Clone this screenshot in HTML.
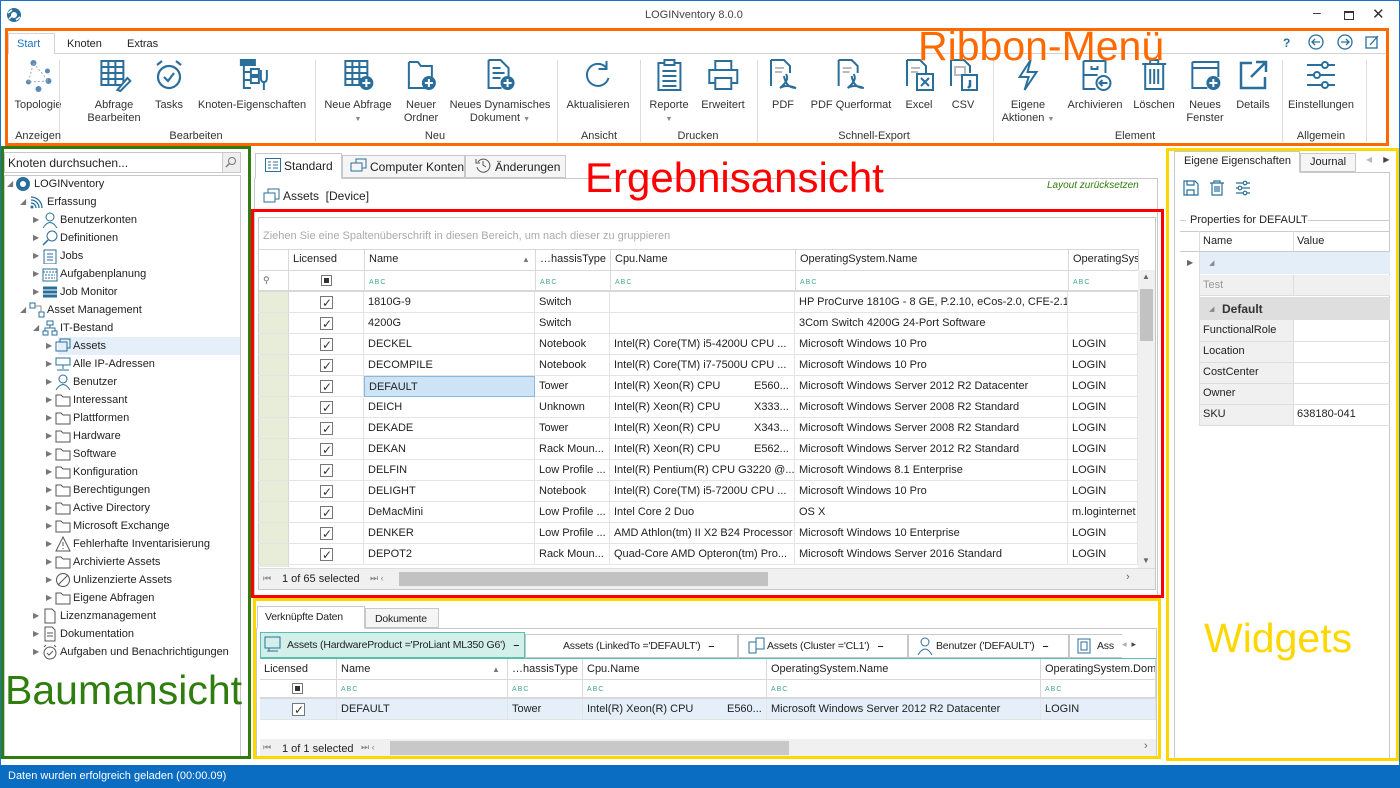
<!DOCTYPE html>
<html><head><meta charset="utf-8"><style>
*{box-sizing:border-box;margin:0;padding:0}
body{width:1400px;height:788px;position:relative;overflow:hidden;background:#fff;font-family:"Liberation Sans",sans-serif;font-size:11px;color:#222}
.a{position:absolute}
.t{position:absolute;white-space:nowrap}
.btn{position:absolute;top:58px;text-align:center;transform:translateX(-50%);line-height:13px;color:#333;white-space:nowrap}
.btn svg{display:block;margin:0 auto 7px;width:34px;height:34px}
.gl{position:absolute;top:130px;transform:translateX(-50%);color:#333;white-space:nowrap}
.sep{position:absolute;top:60px;width:1px;height:82px;background:#dcdcdc}
.tr{position:absolute;height:18px;line-height:18px;white-space:nowrap;color:#222}
.tr .ar{position:absolute;top:0;color:#777;font-size:8px}
.tr svg{position:absolute;top:1px;width:16px;height:16px}
.row{position:absolute;left:258px;width:880px;height:21px;border-bottom:1px solid #e4e4e4}
.c{position:absolute;top:0;height:21px;line-height:21px;border-right:1px solid #e4e4e4;padding-left:4px;overflow:hidden;white-space:nowrap}
.cb{position:absolute;width:13px;height:13px;border:1px solid #777;background:#fff;top:4px}
.cb:after{content:"✓";position:absolute;left:1px;top:-4px;font-size:12px;color:#333}
.hd{position:absolute;height:21px;line-height:21px;border-right:1px solid #d8d8d8;padding-left:4px;white-space:nowrap;overflow:hidden;color:#222}
.abc{font-size:7px;color:#4a8;letter-spacing:1px}
.st{font-size:10.5px;letter-spacing:-0.2px}
</style></head><body>
<div class="a" style="left:0;top:0;width:1400px;height:788px;border:1px solid #1a73c9"></div>
<svg class="a" style="left:6px;top:7px" width="16" height="16" viewBox="0 0 16 16"><circle cx="8" cy="8" r="7" fill="#2a6f9b"/><circle cx="8" cy="8" r="3" fill="#fff"/><path d="M2 6L6 3M10 13L14 10M3 12L6 9" stroke="#fff" stroke-width="1.5"/></svg>
<div class="t" style="left:645px;top:9px;color:#444;font-size:11px">LOGINventory 8.0.0</div>
<div class="t" style="left:1313px;top:4px;font-size:14px;color:#333">–</div>
<div class="a" style="left:1344px;top:11px;width:10px;height:9px;border:1px solid #333;border-top-width:2px"></div>
<div class="t" style="left:1372px;top:5px;font-size:15px;color:#333">✕</div>

<div class="a" style="left:8px;top:53px;width:1380px;height:1px;background:#d4d4d4"></div>
<div class="a" style="left:8px;top:33px;width:47px;height:21px;border:1px solid #d4d4d4;border-bottom:none;background:#fff"></div>
<div class="t" style="left:17px;top:38px;color:#1a73c9">Start</div>
<div class="t" style="left:67px;top:38px">Knoten</div>
<div class="t" style="left:127px;top:38px">Extras</div>
<div class="t" style="left:1283px;top:36px;color:#2a6f9b;font-weight:bold;font-size:12px">?</div>
<svg class="a" style="left:1308px;top:34px" width="80" height="17"><g fill="none" stroke="#2a6f9b" stroke-width="1.3"><circle cx="8" cy="8" r="7"/><path d="M12 8H4M7 5L4 8L7 11"/><circle cx="37" cy="8" r="7"/><path d="M33 8H41M38 5L41 8L38 11"/><rect x="58" y="3" width="11" height="11"/><path d="M62 11L70 2"/></g></svg>

<div class="btn" style="left:38px"><svg viewBox="0 0 34 34"><g fill="#5b8ab8"><circle cx="12" cy="5" r="3"/><circle cx="26" cy="13" r="2.5"/><circle cx="7" cy="24" r="2.5"/><circle cx="27" cy="23" r="3"/><circle cx="17" cy="31" r="3"/></g><path d="M12 5L27 23L7 24Z" stroke="#9ab" fill="none" stroke-dasharray="2 2"/></svg>Topologie</div>
<div class="btn" style="left:114px"><svg viewBox="0 0 34 34"><g fill="none" stroke="#2a6f9b" stroke-width="2"><rect x="4" y="3" width="22" height="24"/><path d="M4 9H26M4 15H26M4 21H26M11 3V27M18 3V27"/><path d="M20 32L30 20L33 23L23 33Z" fill="#fff"/></g></svg>Abfrage<br>Bearbeiten</div>
<div class="btn" style="left:169px"><svg viewBox="0 0 34 34"><g fill="none" stroke="#2a6f9b" stroke-width="2.2"><circle cx="17" cy="19" r="11"/><path d="M12 19L16 23L22 15M5 7L10 3M29 7L24 3"/></g></svg>Tasks</div>
<div class="btn" style="left:252px"><svg viewBox="0 0 34 34"><g fill="none" stroke="#2a6f9b" stroke-width="2"><rect x="6" y="2" width="14" height="5" fill="#2a6f9b"/><path d="M9 7V31M9 14H16M9 22H16M9 30H16"/><rect x="16" y="11" width="8" height="6"/><rect x="16" y="19" width="8" height="6"/><path d="M26 12V20Q26 24 29 24V32M32 12V20Q32 24 29 24"/></g></svg>Knoten-Eigenschaften</div>
<div class="btn" style="left:358px"><svg viewBox="0 0 34 34"><g fill="none" stroke="#2a6f9b" stroke-width="2"><rect x="4" y="3" width="22" height="24"/><path d="M4 9H26M4 15H26M4 21H26M11 3V27M18 3V27"/></g><circle cx="25" cy="25" r="7" fill="#2a6f9b"/><path d="M25 21V29M21 25H29" stroke="#fff" stroke-width="2"/></svg>Neue Abfrage<br><span style="font-size:7px;color:#888">▼</span></div>
<div class="btn" style="left:421px"><svg viewBox="0 0 34 34"><path d="M5 4H14L17 8H28V20M22 30H5V4" fill="none" stroke="#2a6f9b" stroke-width="2"/><circle cx="25" cy="25" r="7" fill="#2a6f9b"/><path d="M25 21V29M21 25H29" stroke="#fff" stroke-width="2"/></svg>Neuer<br>Ordner</div>
<div class="btn" style="left:500px"><svg viewBox="0 0 34 34"><path d="M6 2H18L26 10V18M19 30H6V2M10 10H18M10 15H22M10 20H18" fill="none" stroke="#2a6f9b" stroke-width="2"/><circle cx="25" cy="25" r="7" fill="#2a6f9b"/><path d="M25 21V29M21 25H29" stroke="#fff" stroke-width="2"/></svg>Neues Dynamisches<br>Dokument <span style="font-size:7px;color:#888">▼</span></div>
<div class="btn" style="left:598px"><svg viewBox="0 0 34 34"><path d="M26 10A11 11 0 1 0 28 20M26 3V11H18" fill="none" stroke="#2a6f9b" stroke-width="2"/></svg>Aktualisieren</div>
<div class="btn" style="left:669px"><svg viewBox="0 0 34 34"><g fill="none" stroke="#2a6f9b" stroke-width="2"><rect x="6" y="5" width="22" height="27"/><rect x="12" y="2" width="10" height="5" fill="#fff"/><path d="M10 13H24M10 18H24M10 23H24M10 28H24"/></g></svg>Reporte<br><span style="font-size:7px;color:#888">▼</span></div>
<div class="btn" style="left:723px"><svg viewBox="0 0 34 34"><g fill="none" stroke="#2a6f9b" stroke-width="2"><rect x="9" y="3" width="16" height="9"/><rect x="3" y="12" width="28" height="13"/><rect x="9" y="20" width="16" height="11" fill="#fff"/></g></svg>Erweitert</div>
<div class="btn" style="left:783px"><svg viewBox="0 0 34 34"><path d="M5 2H18L24 8V15M5 2V28" fill="none" stroke="#2a6f9b" stroke-width="2"/><path d="M9 10H18M9 14H16" stroke="#bbb" stroke-width="2"/><path d="M18 18Q20 30 30 30Q20 26 14 30Q24 22 20 16" fill="none" stroke="#2a6f9b" stroke-width="2"/></svg>PDF</div>
<div class="btn" style="left:851px"><svg viewBox="0 0 34 34"><path d="M5 2H18L24 8V15M5 2V28" fill="none" stroke="#2a6f9b" stroke-width="2"/><path d="M9 10H18M9 14H16" stroke="#bbb" stroke-width="2"/><path d="M18 18Q20 30 30 30Q20 26 14 30Q24 22 20 16" fill="none" stroke="#2a6f9b" stroke-width="2"/></svg>PDF Querformat</div>
<div class="btn" style="left:919px"><svg viewBox="0 0 34 34"><path d="M5 2H18L24 8V15M5 2V28" fill="none" stroke="#2a6f9b" stroke-width="2"/><path d="M9 10H18M9 14H16" stroke="#bbb" stroke-width="2"/><rect x="15" y="16" width="16" height="16" fill="none" stroke="#2a6f9b" stroke-width="2"/><path d="M19 20L27 28M27 20L19 28" stroke="#2a6f9b" stroke-width="2"/></svg>Excel</div>
<div class="btn" style="left:963px"><svg viewBox="0 0 34 34"><path d="M5 2H18L24 8V15M5 2V28" fill="none" stroke="#2a6f9b" stroke-width="2"/><rect x="9" y="9" width="10" height="8" fill="none" stroke="#bbb" stroke-width="2"/><rect x="16" y="17" width="15" height="15" fill="none" stroke="#2a6f9b" stroke-width="2"/><path d="M24 22V28L22 30" stroke="#2a6f9b" stroke-width="2.5"/></svg>CSV</div>
<div class="btn" style="left:1028px"><svg viewBox="0 0 34 34"><path d="M20 2L9 19H18L14 32L26 14H17Z" fill="none" stroke="#2a6f9b" stroke-width="2"/></svg>Eigene<br>Aktionen <span style="font-size:7px;color:#888">▼</span></div>
<div class="btn" style="left:1095px"><svg viewBox="0 0 34 34"><g fill="none" stroke="#2a6f9b" stroke-width="2"><path d="M5 3H27V15M5 3V31H17M5 17H19M13 8V11H19V8"/><circle cx="25" cy="25" r="7"/><path d="M29 25H21M24 22L21 25L24 28"/></g></svg>Archivieren</div>
<div class="btn" style="left:1154px"><svg viewBox="0 0 34 34"><g fill="none" stroke="#2a6f9b" stroke-width="2"><path d="M5 6H29M13 6V2H21V6M8 6V31H26V6M13 11V26M17 11V26M21 11V26"/></g></svg>Löschen</div>
<div class="btn" style="left:1205px"><svg viewBox="0 0 34 34"><g fill="none" stroke="#2a6f9b" stroke-width="2"><path d="M4 4H30V19M4 4V30H19M4 10H30"/></g><circle cx="25" cy="25" r="7" fill="#2a6f9b"/><path d="M25 21V29M21 25H29" stroke="#fff" stroke-width="2"/></svg>Neues<br>Fenster</div>
<div class="btn" style="left:1253px"><svg viewBox="0 0 34 34"><g fill="none" stroke="#2a6f9b" stroke-width="2.5"><path d="M16 5H5V30H29V19M20 4H30V14M30 4L15 19"/></g></svg>Details</div>
<div class="btn" style="left:1321px"><svg viewBox="0 0 34 34"><g fill="none" stroke="#2a6f9b" stroke-width="2"><path d="M3 7H31M3 17H31M3 27H31"/><circle cx="21" cy="7" r="3" fill="#fff"/><circle cx="13" cy="17" r="3" fill="#fff"/><circle cx="21" cy="27" r="3" fill="#fff"/></g></svg>Einstellungen</div>
<div class="sep" style="left:59px"></div><div class="sep" style="left:315px"></div><div class="sep" style="left:557px"></div><div class="sep" style="left:640px"></div><div class="sep" style="left:757px"></div><div class="sep" style="left:993px"></div><div class="sep" style="left:1282px"></div><div class="sep" style="left:1366px"></div>
<div class="gl" style="left:38px">Anzeigen</div><div class="gl" style="left:196px">Bearbeiten</div><div class="gl" style="left:435px">Neu</div><div class="gl" style="left:599px">Ansicht</div><div class="gl" style="left:698px">Drucken</div><div class="gl" style="left:874px">Schnell-Export</div><div class="gl" style="left:1135px">Element</div><div class="gl" style="left:1321px">Allgemein</div>
<div class="a" style="left:5px;top:28px;width:1384px;height:118px;border:3px solid #ff6a00"></div>
<div class="t" style="left:918px;top:23px;font-size:41px;color:#ff6a00">Ribbon-Menü</div>

<div class="a" style="left:4px;top:152px;width:237px;height:21px;border:1px solid #c8c8c8"></div>
<div class="t" style="left:8px;top:156px;font-size:12px">Knoten durchsuchen...</div>
<div class="a" style="left:222px;top:153px;width:18px;height:19px;background:#eee;border-left:1px solid #ccc"></div>
<svg class="a" style="left:225px;top:156px" width="12" height="12"><circle cx="7" cy="5" r="3.5" fill="none" stroke="#777"/><path d="M4.5 7.5L1 11" stroke="#777" stroke-width="1.3"/></svg>
<div class="a" style="left:4px;top:175px;width:237px;height:582px;border:1px solid #c8c8c8"></div>
<div class="a" style="left:58px;top:337px;width:182px;height:18px;background:#e4eff9"></div>

<div class="tr" style="left:34px;top:175px"><span class="ar" style="left:-27px">◢</span><svg style="left:-19px" viewBox="0 0 16 16"><circle cx="8" cy="8" r="7" fill="#2a6f9b"/><circle cx="8" cy="8" r="3" fill="#fff"/></svg>LOGINventory</div>
<div class="tr" style="left:47px;top:193px"><span class="ar" style="left:-27px">◢</span><svg style="left:-18px" viewBox="0 0 16 16"><path d="M2 6A8 8 0 0 1 10 14M2 9A5 5 0 0 1 7 14M2 3A11 11 0 0 1 13 14" fill="none" stroke="#2a6f9b" stroke-width="1.3"/><circle cx="3" cy="13" r="1.5" fill="#2a6f9b"/></svg>Erfassung</div>
<div class="tr" style="left:60px;top:211px"><span class="ar" style="left:-27px">▶</span><svg style="left:-18px" viewBox="0 0 16 16"><circle cx="8" cy="5" r="4" fill="none" stroke="#2a6f9b"/><path d="M1 16Q8 5 15 16" fill="none" stroke="#2a6f9b"/></svg>Benutzerkonten</div>
<div class="tr" style="left:60px;top:229px"><span class="ar" style="left:-27px">▶</span><svg style="left:-18px" viewBox="0 0 16 16"><circle cx="10" cy="6" r="5" fill="none" stroke="#2a6f9b"/><path d="M6 10L1 15" stroke="#2a6f9b" stroke-width="1.5"/></svg>Definitionen</div>
<div class="tr" style="left:60px;top:247px"><span class="ar" style="left:-27px">▶</span><svg style="left:-18px" viewBox="0 0 16 16"><rect x="2" y="2" width="12" height="14" fill="none" stroke="#2a6f9b"/><path d="M5 6H11M5 9H11M5 12H11" stroke="#2a6f9b"/></svg>Jobs</div>
<div class="tr" style="left:60px;top:265px"><span class="ar" style="left:-27px">▶</span><svg style="left:-18px" viewBox="0 0 16 16"><rect x="1" y="3" width="14" height="12" fill="none" stroke="#2a6f9b"/><path d="M1 6H15M3 9H13M3 12H13" stroke="#2a6f9b" stroke-dasharray="2 1"/></svg>Aufgabenplanung</div>
<div class="tr" style="left:60px;top:283px"><span class="ar" style="left:-27px">▶</span><svg style="left:-18px" viewBox="0 0 16 16"><path d="M1 4H15M1 8H15M1 12H15" stroke="#2a6f9b" stroke-width="3"/></svg>Job Monitor</div>
<div class="tr" style="left:47px;top:301px"><span class="ar" style="left:-27px">◢</span><svg style="left:-18px" viewBox="0 0 16 16"><rect x="1" y="1" width="5" height="5" fill="none" stroke="#2a6f9b"/><rect x="10" y="10" width="5" height="5" fill="none" stroke="#2a6f9b"/><path d="M6 4H12V10" stroke="#888" fill="none"/></svg>Asset Management</div>
<div class="tr" style="left:60px;top:319px"><span class="ar" style="left:-27px">◢</span><svg style="left:-18px" viewBox="0 0 16 16"><rect x="5" y="1" width="6" height="4" fill="none" stroke="#2a6f9b"/><rect x="1" y="11" width="5" height="4" fill="none" stroke="#2a6f9b"/><rect x="10" y="11" width="5" height="4" fill="none" stroke="#2a6f9b"/><path d="M8 5V8H3V11M8 8H13V11" stroke="#2a6f9b" fill="none"/></svg>IT-Bestand</div>
<div class="tr" style="left:73px;top:337px"><span class="ar" style="left:-27px">▶</span><svg style="left:-18px" viewBox="0 0 16 16"><rect x="1" y="4" width="11" height="9" fill="none" stroke="#2a6f9b"/><path d="M5 4V1H15V10H12" stroke="#2a6f9b" fill="none"/></svg>Assets</div>
<div class="tr" style="left:73px;top:355px"><span class="ar" style="left:-27px">▶</span><svg style="left:-18px" viewBox="0 0 16 16"><rect x="1" y="2" width="14" height="7" fill="none" stroke="#2a6f9b"/><path d="M8 9V13M2 14H14" stroke="#2a6f9b"/></svg>Alle IP-Adressen</div>
<div class="tr" style="left:73px;top:373px"><span class="ar" style="left:-27px">▶</span><svg style="left:-18px" viewBox="0 0 16 16"><circle cx="8" cy="5" r="4" fill="none" stroke="#2a6f9b"/><path d="M1 16Q8 5 15 16" fill="none" stroke="#2a6f9b"/></svg>Benutzer</div>
<div class="tr" style="left:73px;top:391px"><span class="ar" style="left:-27px">▶</span><svg style="left:-18px" viewBox="0 0 16 16"><path d="M1 3H6L8 5H15V14H1Z" fill="none" stroke="#555"/></svg>Interessant</div>
<div class="tr" style="left:73px;top:409px"><span class="ar" style="left:-27px">▶</span><svg style="left:-18px" viewBox="0 0 16 16"><path d="M1 3H6L8 5H15V14H1Z" fill="none" stroke="#555"/></svg>Plattformen</div>
<div class="tr" style="left:73px;top:427px"><span class="ar" style="left:-27px">▶</span><svg style="left:-18px" viewBox="0 0 16 16"><path d="M1 3H6L8 5H15V14H1Z" fill="none" stroke="#555"/></svg>Hardware</div>
<div class="tr" style="left:73px;top:445px"><span class="ar" style="left:-27px">▶</span><svg style="left:-18px" viewBox="0 0 16 16"><path d="M1 3H6L8 5H15V14H1Z" fill="none" stroke="#555"/></svg>Software</div>
<div class="tr" style="left:73px;top:463px"><span class="ar" style="left:-27px">▶</span><svg style="left:-18px" viewBox="0 0 16 16"><path d="M1 3H6L8 5H15V14H1Z" fill="none" stroke="#555"/></svg>Konfiguration</div>
<div class="tr" style="left:73px;top:481px"><span class="ar" style="left:-27px">▶</span><svg style="left:-18px" viewBox="0 0 16 16"><path d="M1 3H6L8 5H15V14H1Z" fill="none" stroke="#555"/></svg>Berechtigungen</div>
<div class="tr" style="left:73px;top:499px"><span class="ar" style="left:-27px">▶</span><svg style="left:-18px" viewBox="0 0 16 16"><path d="M1 3H6L8 5H15V14H1Z" fill="none" stroke="#555"/></svg>Active Directory</div>
<div class="tr" style="left:73px;top:517px"><span class="ar" style="left:-27px">▶</span><svg style="left:-18px" viewBox="0 0 16 16"><path d="M1 3H6L8 5H15V14H1Z" fill="none" stroke="#555"/></svg>Microsoft Exchange</div>
<div class="tr" style="left:73px;top:535px"><span class="ar" style="left:-27px">▶</span><svg style="left:-18px" viewBox="0 0 16 16"><path d="M8 1L15 15H1Z" fill="none" stroke="#555"/><path d="M8 6V10M8 12V13" stroke="#555"/></svg>Fehlerhafte Inventarisierung</div>
<div class="tr" style="left:73px;top:553px"><span class="ar" style="left:-27px">▶</span><svg style="left:-18px" viewBox="0 0 16 16"><path d="M1 3H6L8 5H15V14H1Z" fill="none" stroke="#555"/></svg>Archivierte Assets</div>
<div class="tr" style="left:73px;top:571px"><span class="ar" style="left:-27px">▶</span><svg style="left:-18px" viewBox="0 0 16 16"><circle cx="8" cy="8" r="6.5" fill="none" stroke="#555"/><path d="M3 13L13 3" stroke="#555"/></svg>Unlizenzierte Assets</div>
<div class="tr" style="left:73px;top:589px"><span class="ar" style="left:-27px">▶</span><svg style="left:-18px" viewBox="0 0 16 16"><path d="M1 3H6L8 5H15V14H1Z" fill="none" stroke="#555"/></svg>Eigene Abfragen</div>
<div class="tr" style="left:60px;top:607px"><span class="ar" style="left:-27px">▶</span><svg style="left:-18px" viewBox="0 0 16 16"><path d="M3 1H10L13 4V15H3Z" fill="none" stroke="#555"/></svg>Lizenzmanagement</div>
<div class="tr" style="left:60px;top:625px"><span class="ar" style="left:-27px">▶</span><svg style="left:-18px" viewBox="0 0 16 16"><path d="M3 1H10L13 4V15H3Z" fill="none" stroke="#555"/><path d="M5 7H11M5 10H11" stroke="#555"/></svg>Dokumentation</div>
<div class="tr" style="left:60px;top:643px"><span class="ar" style="left:-27px">▶</span><svg style="left:-18px" viewBox="0 0 16 16"><circle cx="8" cy="9" r="6" fill="none" stroke="#555"/><path d="M5 9L7 11L11 7M2 3L4 1M14 3L12 1" stroke="#555" fill="none"/></svg>Aufgaben und Benachrichtigungen</div>
<div class="a" style="left:1px;top:146px;width:250px;height:613px;border:3px solid #2e7d0e"></div>
<div class="t" style="left:5px;top:667px;font-size:41px;color:#2e7d0e">Baumansicht</div>

<div class="a" style="left:254px;top:178px;width:904px;height:1px;background:#c8c8c8"></div>
<div class="a" style="left:254px;top:178px;width:1px;height:420px;background:#c8c8c8"></div>
<div class="a" style="left:1157px;top:178px;width:1px;height:420px;background:#c8c8c8"></div>
<div class="a" style="left:255px;top:153px;width:87px;height:26px;border:1px solid #c8c8c8;border-bottom:1px solid #fff;background:#fff"></div>
<div class="a" style="left:342px;top:155px;width:123px;height:23px;border:1px solid #c8c8c8;background:#f5f5f5"></div>
<div class="a" style="left:465px;top:155px;width:101px;height:23px;border:1px solid #c8c8c8;background:#f5f5f5"></div>
<svg class="a" style="left:265px;top:158px" width="16" height="14"><rect x="0.5" y="0.5" width="15" height="13" fill="none" stroke="#2a6f9b"/><path d="M3 4H6M8 4H13M3 7H6M8 7H13M3 10H6M8 10H13" stroke="#2a6f9b"/></svg>
<div class="t" style="left:284px;top:159px;font-size:12px">Standard</div>
<svg class="a" style="left:350px;top:158px" width="18" height="16"><rect x="1" y="5" width="11" height="8" fill="none" stroke="#2a6f9b"/><path d="M6 5V1H16V10H12" fill="none" stroke="#2a6f9b"/></svg>
<div class="t" style="left:370px;top:160px;font-size:12px">Computer Konten</div>
<svg class="a" style="left:475px;top:157px" width="16" height="16"><path d="M3 5A6.5 6.5 0 1 1 2 10" fill="none" stroke="#555"/><path d="M1 2V6H5M8 4V8L11 10" fill="none" stroke="#555"/></svg>
<div class="t" style="left:495px;top:160px;font-size:12px">Änderungen</div>
<svg class="a" style="left:263px;top:188px" width="18" height="16"><rect x="1" y="5" width="11" height="9" fill="none" stroke="#2a6f9b"/><path d="M5 5V1H16V11H12" fill="none" stroke="#2a6f9b"/></svg>
<div class="t" style="left:283px;top:189px;font-size:12px">Assets&nbsp; [Device]</div>
<div class="t" style="left:1047px;top:180px;font-style:italic;color:#2e7d0e;font-size:10px">Layout zurücksetzen</div>
<div class="t" style="left:585px;top:154px;font-size:42px;color:#ff0000">Ergebnisansicht</div>

<div class="a" style="left:258px;top:217px;width:898px;height:373px;border:1px solid #c8c8c8"></div>
<div class="t" style="left:263px;top:230px;color:#aaa">Ziehen Sie eine Spaltenüberschrift in diesen Bereich, um nach dieser zu gruppieren</div>
<div class="a" style="left:259px;top:249px;width:879px;height:1px;background:#d8d8d8"></div>
<div class="a" style="left:259px;top:249px;width:880px;height:21px">
<div class="hd" style="left:0;width:30px"></div><div class="hd" style="left:30px;width:76px">Licensed</div><div class="hd" style="left:106px;width:171px">Name<span style="position:absolute;left:157px;font-size:8px;color:#777">▲</span></div><div class="hd" style="left:277px;width:75px">…hassisType</div><div class="hd" style="left:352px;width:185px">Cpu.Name</div><div class="hd" style="left:537px;width:273px">OperatingSystem.Name</div><div class="hd" style="left:810px;width:70px">OperatingSystem</div></div>
<div class="a" style="left:259px;top:270px;width:879px;height:22px;border-top:1px solid #d8d8d8;border-bottom:2px solid #d8d8d8">
<div class="hd" style="left:0;width:30px;color:#666;font-size:9px;height:19px;line-height:19px">⚲</div><div class="hd" style="left:30px;width:76px;height:19px"><span class="a" style="left:32px;top:4px;width:11px;height:11px;border:1px solid #777;background:#fff"><span class="a" style="left:2px;top:2px;width:5px;height:5px;background:#333"></span></span></div><div class="hd" style="left:106px;width:171px;height:19px"><span class="abc">ABC</span></div><div class="hd" style="left:277px;width:75px;height:19px"><span class="abc">ABC</span></div><div class="hd" style="left:352px;width:185px;height:19px"><span class="abc">ABC</span></div><div class="hd" style="left:537px;width:273px;height:19px"><span class="abc">ABC</span></div><div class="hd" style="left:810px;width:70px;height:19px"><span class="abc">ABC</span></div></div>
<div class="a" style="left:259px;top:292px;width:30px;height:275px;background:#e8edda;border-right:1px solid #d8d8d8"></div>

<div class="row" style="top:292px"><div class="c" style="left:30px;width:76px"><span class="cb" style="left:32px"></span></div><div class="c" style="left:106px;width:171px">1810G-9</div><div class="c" style="left:277px;width:75px">Switch</div><div class="c" style="left:352px;width:185px"></div><div class="c" style="left:537px;width:273px">HP ProCurve 1810G - 8 GE, P.2.10, eCos-2.0, CFE-2.1</div><div class="c" style="left:810px;width:70px"></div></div>
<div class="row" style="top:313px"><div class="c" style="left:30px;width:76px"><span class="cb" style="left:32px"></span></div><div class="c" style="left:106px;width:171px">4200G</div><div class="c" style="left:277px;width:75px">Switch</div><div class="c" style="left:352px;width:185px"></div><div class="c" style="left:537px;width:273px">3Com Switch 4200G 24-Port Software</div><div class="c" style="left:810px;width:70px"></div></div>
<div class="row" style="top:334px"><div class="c" style="left:30px;width:76px"><span class="cb" style="left:32px"></span></div><div class="c" style="left:106px;width:171px">DECKEL</div><div class="c" style="left:277px;width:75px">Notebook</div><div class="c" style="left:352px;width:185px">Intel(R) Core(TM) i5-4200U CPU ...</div><div class="c" style="left:537px;width:273px">Microsoft Windows 10 Pro</div><div class="c" style="left:810px;width:70px">LOGIN</div></div>
<div class="row" style="top:355px"><div class="c" style="left:30px;width:76px"><span class="cb" style="left:32px"></span></div><div class="c" style="left:106px;width:171px">DECOMPILE</div><div class="c" style="left:277px;width:75px">Notebook</div><div class="c" style="left:352px;width:185px">Intel(R) Core(TM) i7-7500U CPU ...</div><div class="c" style="left:537px;width:273px">Microsoft Windows 10 Pro</div><div class="c" style="left:810px;width:70px">LOGIN</div></div>
<div class="row" style="top:376px"><div class="c" style="left:30px;width:76px"><span class="cb" style="left:32px"></span></div><div class="c" style="left:106px;width:171px;background:#cde4f7;border:1px solid #8ab6e0">DEFAULT</div><div class="c" style="left:277px;width:75px">Tower</div><div class="c" style="left:352px;width:185px">Intel(R) Xeon(R) CPU&nbsp;&nbsp;&nbsp;&nbsp;&nbsp;&nbsp;&nbsp;&nbsp;&nbsp;&nbsp;&nbsp;E560...</div><div class="c" style="left:537px;width:273px">Microsoft Windows Server 2012 R2 Datacenter</div><div class="c" style="left:810px;width:70px">LOGIN</div></div>
<div class="row" style="top:397px"><div class="c" style="left:30px;width:76px"><span class="cb" style="left:32px"></span></div><div class="c" style="left:106px;width:171px">DEICH</div><div class="c" style="left:277px;width:75px">Unknown</div><div class="c" style="left:352px;width:185px">Intel(R) Xeon(R) CPU&nbsp;&nbsp;&nbsp;&nbsp;&nbsp;&nbsp;&nbsp;&nbsp;&nbsp;&nbsp;&nbsp;X333...</div><div class="c" style="left:537px;width:273px">Microsoft Windows Server 2008 R2 Standard</div><div class="c" style="left:810px;width:70px">LOGIN</div></div>
<div class="row" style="top:418px"><div class="c" style="left:30px;width:76px"><span class="cb" style="left:32px"></span></div><div class="c" style="left:106px;width:171px">DEKADE</div><div class="c" style="left:277px;width:75px">Tower</div><div class="c" style="left:352px;width:185px">Intel(R) Xeon(R) CPU&nbsp;&nbsp;&nbsp;&nbsp;&nbsp;&nbsp;&nbsp;&nbsp;&nbsp;&nbsp;&nbsp;X343...</div><div class="c" style="left:537px;width:273px">Microsoft Windows Server 2008 R2 Standard</div><div class="c" style="left:810px;width:70px">LOGIN</div></div>
<div class="row" style="top:439px"><div class="c" style="left:30px;width:76px"><span class="cb" style="left:32px"></span></div><div class="c" style="left:106px;width:171px">DEKAN</div><div class="c" style="left:277px;width:75px">Rack Moun...</div><div class="c" style="left:352px;width:185px">Intel(R) Xeon(R) CPU&nbsp;&nbsp;&nbsp;&nbsp;&nbsp;&nbsp;&nbsp;&nbsp;&nbsp;&nbsp;&nbsp;E562...</div><div class="c" style="left:537px;width:273px">Microsoft Windows Server 2012 R2 Standard</div><div class="c" style="left:810px;width:70px">LOGIN</div></div>
<div class="row" style="top:460px"><div class="c" style="left:30px;width:76px"><span class="cb" style="left:32px"></span></div><div class="c" style="left:106px;width:171px">DELFIN</div><div class="c" style="left:277px;width:75px">Low Profile ...</div><div class="c" style="left:352px;width:185px">Intel(R) Pentium(R) CPU G3220 @...</div><div class="c" style="left:537px;width:273px">Microsoft Windows 8.1 Enterprise</div><div class="c" style="left:810px;width:70px">LOGIN</div></div>
<div class="row" style="top:481px"><div class="c" style="left:30px;width:76px"><span class="cb" style="left:32px"></span></div><div class="c" style="left:106px;width:171px">DELIGHT</div><div class="c" style="left:277px;width:75px">Notebook</div><div class="c" style="left:352px;width:185px">Intel(R) Core(TM) i5-7200U CPU ...</div><div class="c" style="left:537px;width:273px">Microsoft Windows 10 Pro</div><div class="c" style="left:810px;width:70px">LOGIN</div></div>
<div class="row" style="top:502px"><div class="c" style="left:30px;width:76px"><span class="cb" style="left:32px"></span></div><div class="c" style="left:106px;width:171px">DeMacMini</div><div class="c" style="left:277px;width:75px">Low Profile ...</div><div class="c" style="left:352px;width:185px">Intel Core 2 Duo</div><div class="c" style="left:537px;width:273px">OS X</div><div class="c" style="left:810px;width:70px">m.loginternet</div></div>
<div class="row" style="top:523px"><div class="c" style="left:30px;width:76px"><span class="cb" style="left:32px"></span></div><div class="c" style="left:106px;width:171px">DENKER</div><div class="c" style="left:277px;width:75px">Low Profile ...</div><div class="c" style="left:352px;width:185px">AMD Athlon(tm) II X2 B24 Processor</div><div class="c" style="left:537px;width:273px">Microsoft Windows 10 Enterprise</div><div class="c" style="left:810px;width:70px">LOGIN</div></div>
<div class="row" style="top:544px"><div class="c" style="left:30px;width:76px"><span class="cb" style="left:32px"></span></div><div class="c" style="left:106px;width:171px">DEPOT2</div><div class="c" style="left:277px;width:75px">Rack Moun...</div><div class="c" style="left:352px;width:185px">Quad-Core AMD Opteron(tm) Pro...</div><div class="c" style="left:537px;width:273px">Microsoft Windows Server 2016 Standard</div><div class="c" style="left:810px;width:70px">LOGIN</div></div>
<div class="a" style="left:1138px;top:270px;width:17px;height:298px;background:#f0f0f0"></div>
<div class="a" style="left:1140px;top:289px;width:13px;height:52px;background:#c2c2c2"></div>
<div class="t" style="left:1142px;top:272px;font-size:8px;color:#666">▲</div><div class="t" style="left:1142px;top:556px;font-size:8px;color:#666">▼</div>
<div class="a" style="left:259px;top:568px;width:896px;height:21px;background:#f0f0f0;border-top:1px solid #ddd"></div>
<div class="a" style="left:399px;top:572px;width:369px;height:14px;background:#c2c2c2"></div>
<div class="t" style="left:263px;top:573px;color:#888;font-size:9px">⏮</div>
<div class="t" style="left:282px;top:573px">1 of 65 selected</div>
<div class="t" style="left:370px;top:573px;color:#888;font-size:9px">⏭ ‹</div>
<div class="t" style="left:1126px;top:571px;color:#666">›</div>
<div class="a" style="left:251px;top:209px;width:913px;height:389px;border:3px solid #ff0000"></div>

<div class="a" style="left:256px;top:628px;width:901px;height:130px;border:1px solid #c8c8c8"></div>
<div class="a" style="left:257px;top:606px;width:108px;height:23px;border:1px solid #c8c8c8;border-bottom:1px solid #fff;background:#fff"></div>
<div class="a" style="left:365px;top:608px;width:74px;height:20px;border:1px solid #c8c8c8;background:#f5f5f5"></div>
<div class="t st" style="left:265px;top:611px">Verknüpfte Daten</div>
<div class="t st" style="left:375px;top:613px">Dokumente</div>
<div class="a" style="left:260px;top:632px;width:265px;height:26px;background:#d3efe9;border:1px solid #5bbfb0"></div>
<div class="a" style="left:525px;top:634px;width:213px;height:24px;border:1px solid #c8c8c8"></div>
<div class="a" style="left:738px;top:634px;width:170px;height:24px;border:1px solid #c8c8c8"></div>
<div class="a" style="left:908px;top:634px;width:161px;height:24px;border:1px solid #c8c8c8"></div>
<div class="a" style="left:1069px;top:634px;width:53px;height:24px;border:1px solid #c8c8c8;border-right:none"></div>
<svg class="a" style="left:264px;top:636px" width="18" height="18"><rect x="1" y="1" width="15" height="11" fill="none" stroke="#2a6f9b"/><path d="M3 15H14M5 12V15" stroke="#2a6f9b"/></svg>
<div class="t st" style="left:287px;top:639px">Assets (HardwareProduct ='ProLiant ML350 G6')&nbsp;&nbsp; <b>–</b></div>
<div class="t st" style="left:563px;top:640px">Assets (LinkedTo ='DEFAULT')&nbsp;&nbsp; <b>–</b></div>
<svg class="a" style="left:748px;top:637px" width="18" height="18"><rect x="1" y="5" width="7" height="11" fill="none" stroke="#2a6f9b"/><rect x="8" y="1" width="8" height="11" fill="none" stroke="#2a6f9b"/></svg>
<div class="t st" style="left:767px;top:640px">Assets (Cluster ='CL1')&nbsp;&nbsp; <b>–</b></div>
<svg class="a" style="left:917px;top:637px" width="16" height="18"><circle cx="8" cy="5" r="4" fill="none" stroke="#2a6f9b"/><path d="M1 18Q8 6 15 18" fill="none" stroke="#2a6f9b"/></svg>
<div class="t st" style="left:936px;top:640px">Benutzer ('DEFAULT')&nbsp;&nbsp; <b>–</b></div>
<svg class="a" style="left:1076px;top:637px" width="16" height="18"><rect x="2" y="2" width="12" height="14" fill="none" stroke="#2a6f9b"/><rect x="5" y="5" width="6" height="8" fill="none" stroke="#2a6f9b"/></svg>
<div class="t st" style="left:1097px;top:640px">Ass</div>
<div class="t" style="left:1122px;top:639px;color:#aaa;font-size:9px">◂ &nbsp;<span style="color:#444">▸</span></div>
<div class="a" style="left:260px;top:658px;width:896px;height:22px;border-top:1px solid #5bbfb0;border-bottom:1px solid #d8d8d8">
<div class="hd" style="left:0;width:77px">Licensed</div><div class="hd" style="left:77px;width:171px">Name<span style="position:absolute;left:155px;font-size:8px;color:#777">▲</span></div><div class="hd" style="left:248px;width:75px">…hassisType</div><div class="hd" style="left:323px;width:184px">Cpu.Name</div><div class="hd" style="left:507px;width:274px">OperatingSystem.Name</div><div class="hd" style="left:781px;width:115px">OperatingSystem.Dom</div></div>
<div class="a" style="left:260px;top:680px;width:896px;height:19px;border-bottom:2px solid #d8d8d8">
<div class="hd" style="left:0;width:77px;height:17px"><span class="a" style="left:32px;top:3px;width:11px;height:11px;border:1px solid #777"><span class="a" style="left:2px;top:2px;width:5px;height:5px;background:#333"></span></span></div><div class="hd" style="left:77px;width:171px;height:17px;line-height:17px"><span class="abc">ABC</span></div><div class="hd" style="left:248px;width:75px;height:17px;line-height:17px"><span class="abc">ABC</span></div><div class="hd" style="left:323px;width:184px;height:17px;line-height:17px"><span class="abc">ABC</span></div><div class="hd" style="left:507px;width:274px;height:17px;line-height:17px"><span class="abc">ABC</span></div><div class="hd" style="left:781px;width:115px;height:17px;line-height:17px"><span class="abc">ABC</span></div></div>
<div class="row" style="top:699px;left:260px;width:896px;background:#e4eff9"><div class="c" style="left:0;width:77px"><span class="cb" style="left:32px"></span></div><div class="c" style="left:77px;width:171px">DEFAULT</div><div class="c" style="left:248px;width:75px">Tower</div><div class="c" style="left:323px;width:184px">Intel(R) Xeon(R) CPU&nbsp;&nbsp;&nbsp;&nbsp;&nbsp;&nbsp;&nbsp;&nbsp;&nbsp;&nbsp;&nbsp;E560...</div><div class="c" style="left:507px;width:274px">Microsoft Windows Server 2012 R2 Datacenter</div><div class="c" style="left:781px;width:115px">LOGIN</div></div>
<div class="a" style="left:260px;top:739px;width:896px;height:18px;background:#f0f0f0"></div>
<div class="a" style="left:390px;top:741px;width:399px;height:14px;background:#c8c8c8"></div>
<div class="t" style="left:263px;top:742px;color:#888;font-size:9px">⏮</div>
<div class="t" style="left:282px;top:743px">1 of 1 selected</div>
<div class="t" style="left:361px;top:742px;color:#888;font-size:9px">⏭ ‹</div>
<div class="t" style="left:1144px;top:740px;color:#666">›</div>
<div class="a" style="left:253px;top:598px;width:908px;height:161px;border:3px solid #ffd700"></div>

<div class="a" style="left:1174px;top:172px;width:216px;height:588px;border:1px solid #c8c8c8"></div>
<div class="a" style="left:1174px;top:151px;width:126px;height:22px;border:1px solid #c8c8c8;border-bottom:1px solid #fff;background:#fff"></div>
<div class="a" style="left:1300px;top:153px;width:56px;height:19px;border:1px solid #c8c8c8;background:#f5f5f5"></div>
<div class="t" style="left:1184px;top:155px">Eigene Eigenschaften</div>
<div class="t" style="left:1310px;top:156px">Journal</div>
<div class="t" style="left:1366px;top:155px;color:#bbb;font-size:8px">◀&nbsp;&nbsp;&nbsp;&nbsp;&nbsp;<span style="color:#444">▶</span></div>
<svg class="a" style="left:1183px;top:180px" width="70" height="16"><g fill="none" stroke="#2a6f9b" stroke-width="1.2"><path d="M1 1H12L15 4V15H1Z M4 1V5H11V1 M4 15V10H11V15"/><path d="M27 3H41M31 3V1H37V3M29 3V15H39V3M32 6V12M34 6V12M36 6V12"/><path d="M53 3H67M53 8H67M53 13H67"/><circle cx="62" cy="3" r="1.8" fill="#fff"/><circle cx="57" cy="8" r="1.8" fill="#fff"/><circle cx="62" cy="13" r="1.8" fill="#fff"/></g></svg>
<div class="a" style="left:1180px;top:220px;width:6px;height:1px;background:#ccc"></div>
<div class="a" style="left:1308px;top:220px;width:82px;height:1px;background:#ccc"></div>
<div class="t" style="left:1190px;top:214px">Properties for DEFAULT</div>
<div class="a" style="left:1180px;top:231px;width:210px;height:195px;border-top:1px solid #ccc"></div>
<div class="a" style="left:1199px;top:231px;width:1px;height:195px;background:#ddd"></div>
<div class="t" style="left:1203px;top:235px">Name</div>
<div class="a" style="left:1293px;top:231px;width:1px;height:20px;background:#ddd"></div>
<div class="t" style="left:1297px;top:235px">Value</div>
<div class="a" style="left:1180px;top:251px;width:210px;height:1px;background:#ccc"></div>
<div class="a" style="left:1200px;top:252px;width:190px;height:22px;background:#e3eef9"></div>
<div class="t" style="left:1187px;top:258px;font-size:8px;color:#666">▶</div>
<div class="t" style="left:1209px;top:259px;font-size:7px;color:#888">◢</div>
<div class="a" style="left:1200px;top:275px;width:190px;height:21px;background:#f0f0f0;border-bottom:1px solid #ddd"></div>
<div class="a" style="left:1293px;top:275px;width:1px;height:21px;background:#ddd"></div>
<div class="t" style="left:1203px;top:279px;color:#999">Test</div>
<div class="a" style="left:1200px;top:297px;width:190px;height:23px;background:#dedede"></div>
<div class="t" style="left:1209px;top:305px;font-size:7px;color:#888">◢</div>
<div class="t" style="left:1222px;top:302px;font-weight:bold;font-size:12px;color:#333">Default</div>
<div class="a" style="left:1200px;top:320px;width:93px;height:105px;background:#f0f0f0"></div>
<div class="a" style="left:1293px;top:320px;width:1px;height:105px;background:#ddd"></div>
<div class="a" style="left:1200px;top:341px;width:190px;height:1px;background:#ddd"></div>
<div class="a" style="left:1200px;top:362px;width:190px;height:1px;background:#ddd"></div>
<div class="a" style="left:1200px;top:383px;width:190px;height:1px;background:#ddd"></div>
<div class="a" style="left:1200px;top:404px;width:190px;height:1px;background:#ddd"></div>
<div class="a" style="left:1200px;top:425px;width:190px;height:1px;background:#ddd"></div>
<div class="t" style="left:1203px;top:324px">FunctionalRole</div>
<div class="t" style="left:1203px;top:345px">Location</div>
<div class="t" style="left:1203px;top:366px">CostCenter</div>
<div class="t" style="left:1203px;top:387px">Owner</div>
<div class="t" style="left:1203px;top:408px">SKU</div>
<div class="t" style="left:1297px;top:408px">638180-041</div>
<div class="a" style="left:1166px;top:148px;width:233px;height:613px;border:3px solid #ffd700"></div>
<div class="t" style="left:1204px;top:615px;font-size:41px;color:#ffd700">Widgets</div>

<div class="a" style="left:0;top:765px;width:1400px;height:23px;background:#0a6dc2"></div>
<div class="t" style="left:8px;top:770px;color:#fff">Daten wurden erfolgreich geladen (00:00.09)</div>
</body></html>
